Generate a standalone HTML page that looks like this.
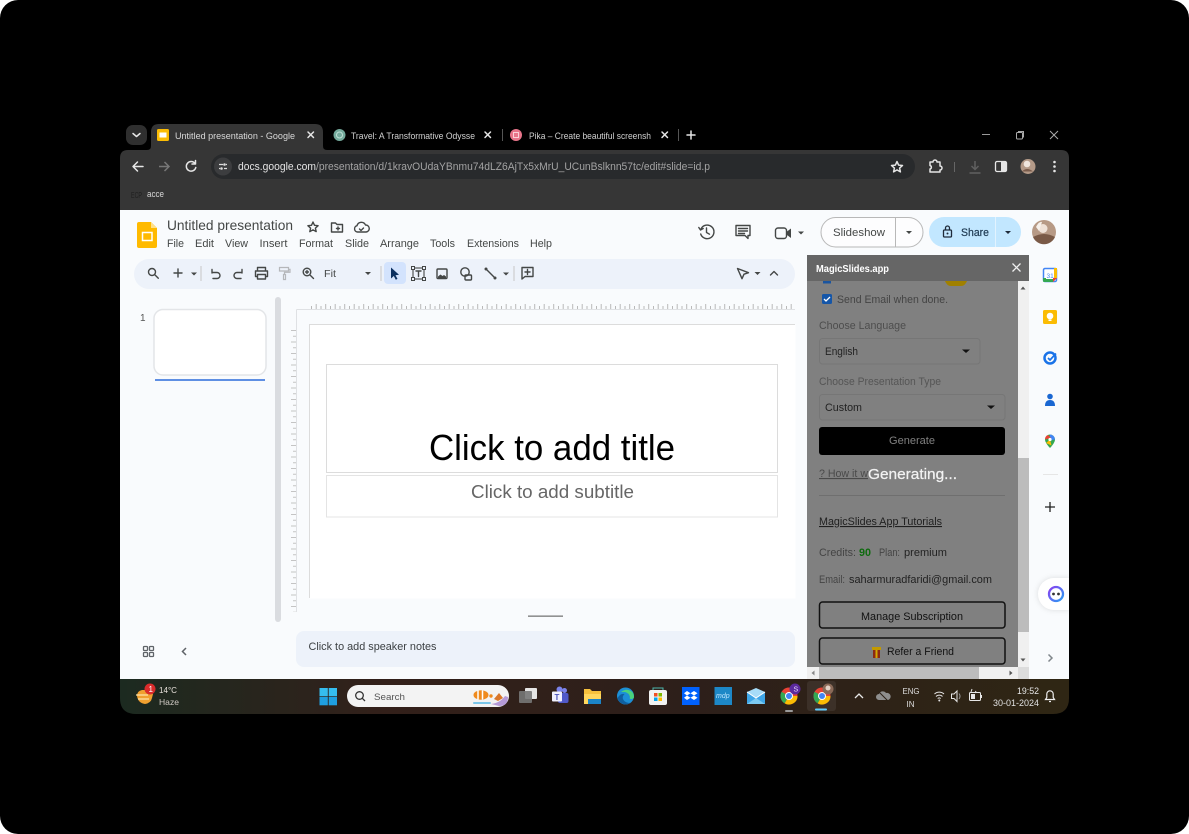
<!DOCTYPE html>
<html><head><meta charset="utf-8"><title>Untitled presentation</title>
<style>
html,body{margin:0;padding:0;background:#fff;width:1189px;height:834px;overflow:hidden}
svg{display:block;position:absolute;left:0;top:0;filter:blur(.35px)}
text{font-family:"Liberation Sans",sans-serif;font-size:11px;white-space:pre}
.ic{fill:none;stroke:#444746;stroke-width:1.4;stroke-linecap:round;stroke-linejoin:round}
.w{fill:none;stroke:#e6e6e6;stroke-width:1.5;stroke-linecap:round;stroke-linejoin:round}
.m{fill:#444746;font-size:10.8px}
.p{font-size:11px;fill:#444}
</style></head><body>
<svg width="1189" height="834" viewBox="0 0 1189 834" xmlns="http://www.w3.org/2000/svg">
<defs>
<pattern id="rx" x="311" y="302" width="19" height="8" patternUnits="userSpaceOnUse"><path d="M.5 7V4M5.2 7V2M10 7V4M14.700 7V2" stroke="#b9b9b9" stroke-width="1" fill="none"/></pattern>
<pattern id="ry" x="290" y="330" width="8" height="23" patternUnits="userSpaceOnUse"><path d="M1 .5H6M3 6.300H6M1 12H6M3 17.800H6" stroke="#c4c4c4" stroke-width="1" fill="none"/></pattern>
<linearGradient id="tb" x1="0" x2="1" y1="0" y2="0"><stop offset="0" stop-color="#1c2a20"/><stop offset=".28" stop-color="#33201a"/><stop offset=".6" stop-color="#2d1f1a"/><stop offset="1" stop-color="#2f2614"/></linearGradient>
<linearGradient id="cop" x1="0" x2="1" y1="0" y2="1"><stop offset="0" stop-color="#8a3ff0"/><stop offset="1" stop-color="#2a9df4"/></linearGradient>
<clipPath id="tbc"><path d="M120 679H1069V698Q1069 714 1053 714H136Q120 714 120 698Z"/></clipPath>
</defs>
<rect width="1189" height="834" fill="#fff"/>
<rect width="1189" height="834" rx="18" fill="#000"/>

<!-- tab strip -->
<rect x="126" y="125" width="21" height="20" rx="7" fill="#2f2f2f"/>
<path d="M133 133.500l3.500 3 3.500-3" class="w"/>
<path d="M147 150Q151 150 151 146V132Q151 124 159 124H315Q323 124 323 132V146Q323 150 327 150Z" fill="#353535"/>
<rect x="157" y="129" width="12" height="12" rx="1.500" fill="#fbbc04"/><rect x="159.500" y="132.500" width="7" height="5" fill="#fff"/>
<text x="175" y="139" fill="#d8d8d8" textLength="120" lengthAdjust="spacingAndGlyphs" style="font-size:9.500px">Untitled presentation - Google</text>
<path d="M308 132l5.500 5.500M313.500 132l-5.500 5.500" class="w"/>
<circle cx="339.500" cy="135" r="6" fill="#74aa9c"/><circle cx="339.500" cy="135" r="3" fill="none" stroke="#bfe0d6"/>
<text x="351" y="139" fill="#d0d0d0" textLength="124" lengthAdjust="spacingAndGlyphs" style="font-size:9.500px">Travel: A Transformative Odysse</text>
<path d="M485 132l5.500 5.500M490.500 132l-5.500 5.500" class="w"/>
<rect x="502" y="129" width="1" height="12" fill="#555"/>
<circle cx="516" cy="135" r="6" fill="#e8758a"/><rect x="513.500" y="132.500" width="5" height="5" fill="none" stroke="#fbd0d8"/>
<text x="529" y="139" fill="#d0d0d0" textLength="122" lengthAdjust="spacingAndGlyphs" style="font-size:9.500px">Pika – Create beautiful screensh</text>
<path d="M662 132l5.500 5.500M667.500 132l-5.500 5.500" class="w"/>
<rect x="678" y="129" width="1" height="12" fill="#555"/>
<path d="M691 131v8M687 135h8" class="w"/>
<path d="M982 134.500h8" stroke="#999" fill="none"/>
<rect x="1016.500" y="132.500" width="6" height="6.500" rx="1" fill="none" stroke="#aaa"/><path d="M1018.500 132v-.5h5v6" fill="none" stroke="#aaa"/>
<path d="M1050 131l8 8M1058 131l-8 8" stroke="#aaa" fill="none"/>

<!-- chrome toolbar -->
<path d="M120 210V158Q120 150 128 150H1061Q1069 150 1069 158V210Z" fill="#363636"/>
<path d="M143 166.500h-9.500M137.500 162l-4.500 4.500 4.500 4.500" class="w"/>
<path d="M159 166.500h9.500M164.500 162l4.500 4.500-4.500 4.500" fill="none" stroke="#777" stroke-width="1.500"/>
<path d="M195 163.500a4.800 4.800 0 1 0 .8 4M195.500 160.500v3.500h-3.500" class="w"/>
<rect x="211" y="154" width="704" height="25" rx="12.500" fill="#282a2c"/>
<circle cx="223" cy="166.500" r="9" fill="#3c3d3f"/>
<path d="M219 164.500h4M226 164.500h1M219 168.500h1M224 168.500h3" stroke="#ddd" stroke-width="1.300" fill="none"/><circle cx="224.500" cy="164.500" r="1.300" fill="#ddd"/><circle cx="221.500" cy="168.500" r="1.300" fill="#ddd"/>
<text x="238" y="170" fill="#e3e3e3" textLength="78" lengthAdjust="spacingAndGlyphs">docs.google.com</text>
<text x="316" y="170" fill="#a3a3a3" textLength="394" lengthAdjust="spacingAndGlyphs">/presentation/d/1kravOUdaYBnmu74dLZ6AjTx5xMrU_UCunBslknn57tc/edit#slide=id.p</text>
<path d="M897 161.500l1.600 3.600 3.900.4-2.900 2.600.8 3.800-3.400-2-3.400 2 .8-3.800-2.900-2.600 3.900-.4z" class="w" stroke-width="1.300"/>
<path d="M930 162h3a2 2 0 0 1 4 0h3v4a2 2 0 0 1 0 4v2h-10v-3a1.800 1.800 0 0 0 0-3.500z" class="w"/>
<rect x="954" y="162" width="1" height="10" fill="#666"/>
<path d="M975 161v8M971.500 166l3.500 3.500 3.500-3.500M969.500 173h11" fill="none" stroke="#606060" stroke-width="1.500"/>
<rect x="995.500" y="161.500" width="11" height="10" rx="1.500" fill="none" stroke="#e6e6e6" stroke-width="1.300"/><rect x="1001" y="161.500" width="5.500" height="10" fill="#e6e6e6"/>
<circle cx="1028" cy="166.500" r="7.500" fill="#b49a88"/><circle cx="1027" cy="164" r="3.300" fill="#f0e6de"/><path d="M1022 171.500q5-5 11 0" fill="#7a5c4c"/>
<circle cx="1054.500" cy="162" r="1.300" fill="#e6e6e6"/><circle cx="1054.500" cy="166.500" r="1.300" fill="#e6e6e6"/><circle cx="1054.500" cy="171" r="1.300" fill="#e6e6e6"/>
<text x="131" y="198" fill="#1f1f1f" textLength="11" lengthAdjust="spacingAndGlyphs" style="font-size:8px">ECP</text>
<text x="147" y="197" fill="#d8d8d8" textLength="17" lengthAdjust="spacingAndGlyphs" style="font-size:9px">acce</text>

<!-- docs -->
<rect x="120" y="210" width="949" height="469" fill="#f9fbfd"/>
<path d="M139 222H151L157 228V246Q157 248 155 248H139Q137 248 137 246V224Q137 222 139 222Z" fill="#ffba00"/>
<path d="M151 222L157 228H151Z" fill="#ffe08a"/>
<rect x="142.500" y="232.500" width="9.500" height="8" fill="none" stroke="#fff" stroke-width="1.500"/>
<text x="167" y="230" fill="#444746" textLength="126" lengthAdjust="spacingAndGlyphs" style="font-size:14px">Untitled presentation</text>
<path d="M313 222l1.500 3.300 3.600.4-2.700 2.400.8 3.500-3.200-1.800-3.200 1.800.8-3.500-2.700-2.400 3.600-.4z" class="ic" stroke-width="1.200"/>
<path d="M331.500 223h4l1.500 1.500h5.500v7.500h-11z" class="ic" stroke-width="1.200"/><path d="M336.500 228.500h3M338 227v3" class="ic" stroke-width="1"/>
<path d="M357.500 232a3.200 3.200 0 0 1-.5-6.300 4.500 4.500 0 0 1 8.500-.7 3.500 3.500 0 0 1 .5 7z" class="ic" stroke-width="1.200"/><path d="M359.500 229l1.500 1.500 2.500-2.500" class="ic" stroke-width="1"/>
<text class="m" x="167" y="247" textLength="17" lengthAdjust="spacingAndGlyphs">File</text>
<text class="m" x="195" y="247" textLength="19" lengthAdjust="spacingAndGlyphs">Edit</text>
<text class="m" x="225" y="247" textLength="23" lengthAdjust="spacingAndGlyphs">View</text>
<text class="m" x="259.500" y="247" textLength="28" lengthAdjust="spacingAndGlyphs">Insert</text>
<text class="m" x="299" y="247" textLength="34" lengthAdjust="spacingAndGlyphs">Format</text>
<text class="m" x="345" y="247" textLength="24" lengthAdjust="spacingAndGlyphs">Slide</text>
<text class="m" x="380" y="247" textLength="39" lengthAdjust="spacingAndGlyphs">Arrange</text>
<text class="m" x="430" y="247" textLength="25" lengthAdjust="spacingAndGlyphs">Tools</text>
<text class="m" x="467" y="247" textLength="52" lengthAdjust="spacingAndGlyphs">Extensions</text>
<text class="m" x="530" y="247" textLength="22" lengthAdjust="spacingAndGlyphs">Help</text>

<path d="M701 229a6.800 6.800 0 1 1 -.3 5M698.800 227.500l1.700 2.500 2.700-1.500M706.500 228v4.500l3 1.700" class="ic" stroke-width="1.500"/>
<path d="M736 225.500h14v10h-2v3l-3-3h-9z" class="ic" stroke-width="1.500"/><path d="M738.500 228.500h9M738.500 231h9M738.500 233.500h6" class="ic" stroke-width="1"/>
<rect x="775.500" y="228" width="11" height="10.500" rx="2.500" class="ic" stroke-width="1.500"/><path d="M787 231.500l4-3v9.500l-4-3z" fill="#444746"/>
<path d="M798 231.500h6l-3 3z" fill="#444746"/>
<rect x="821" y="217.500" width="102" height="29.500" rx="14.700" fill="#fff" fill-opacity=".6" stroke="#b8b8b8"/>
<rect x="895" y="218" width="1" height="29" fill="#b8b8b8"/>
<text x="833" y="236" fill="#444746" textLength="52" lengthAdjust="spacingAndGlyphs" style="font-size:11px">Slideshow</text>
<path d="M906 231h6l-3 3z" fill="#444746"/>
<rect x="929" y="217" width="92" height="30" rx="15" fill="#c2e7ff"/>
<rect x="995" y="217" width="1" height="30" fill="#e2f3ff"/>
<rect x="943.500" y="230" width="8" height="7" rx="1" fill="none" stroke="#1f2b3a" stroke-width="1.300"/><path d="M945.500 230v-2a2 2 0 0 1 4 0v2" fill="none" stroke="#1f2b3a" stroke-width="1.300"/><circle cx="947.500" cy="233.500" r="1" fill="#1f2b3a"/>
<text x="961" y="236" fill="#1f3a52" textLength="28" lengthAdjust="spacingAndGlyphs" style="font-size:11px;stroke:#1f3a52;stroke-width:.2px">Share</text>
<path d="M1005 231h6l-3 3z" fill="#1f2b3a"/>
<circle cx="1044" cy="232" r="12" fill="#b79a86"/><circle cx="1043" cy="228.500" r="4.500" fill="#efe2d8"/><path d="M1033 237q11-6 22 0a12 12 0 0 1-22 0z" fill="#7a5a47"/><path d="M1036 227q3-6 6-5l-3 9z" fill="#f6f0ea"/>

<!-- toolbar -->
<rect x="134" y="259" width="661" height="30" rx="15" fill="#edf2fa"/>
<circle cx="152" cy="272" r="3.500" class="ic"/><path d="M154.800 274.800l3.500 3.500" class="ic"/>
<path d="M178 269v8M174 273h8" class="ic" stroke-width="1.600"/>
<path d="M191 272.500h6l-3 3z" fill="#444746"/>
<rect x="200.500" y="266" width="1" height="15" fill="#c7c7c7"/>
<path d="M212 273v-3.500M212 272.500h5a3 3 0 0 1 0 6h-4" class="ic" stroke-width="1.200"/>
<path d="M242 273v-3.500M242 272.500h-5a3 3 0 0 0 0 6h4" class="ic" stroke-width="1.200"/>
<path d="M257.500 271v-3.500h8v3.500M257.500 276.500h-2v-5.500h12v5.500h-2M257.500 274.500h8v4.500h-8z" class="ic" stroke-width="1.200"/>
<path d="M279.500 267.500h9v3.500h-9zM288.500 269.300h1.500v3h-5.500v2M283.500 274.500h2v5h-2z" fill="none" stroke="#b5b7ba" stroke-width="1.200"/>
<circle cx="307" cy="272" r="3.800" class="ic"/><path d="M310 275l3.500 3.500M305.500 272h3M307 270.500v3" class="ic"/>
<text x="324" y="277" fill="#444746" textLength="12" lengthAdjust="spacingAndGlyphs" style="font-size:10.500px">Fit</text>
<path d="M365 272h6l-3 3z" fill="#444746"/>
<rect x="380.500" y="266" width="1" height="15" fill="#c7c7c7"/>
<rect x="384" y="262" width="22" height="22" rx="4" fill="#d3e3fd"/>
<path d="M391 267.500v11l2.800-2.500 2 3.800 1.700-.9-2-3.700 3.500-.4z" fill="#0b3060"/>
<rect x="413" y="268" width="11" height="11" fill="none" stroke="#444746" stroke-width="1.100"/>
<rect x="411.500" y="266.500" width="3" height="3" fill="#edf2fa" stroke="#444746"/><rect x="422.500" y="266.500" width="3" height="3" fill="#edf2fa" stroke="#444746"/><rect x="411.500" y="277.500" width="3" height="3" fill="#edf2fa" stroke="#444746"/><rect x="422.500" y="277.500" width="3" height="3" fill="#edf2fa" stroke="#444746"/>
<path d="M416 271h5M418.500 271v5.500" class="ic" stroke-width="1.100"/>
<rect x="437" y="269" width="10" height="9.500" rx="1" class="ic" stroke-width="1.200"/><path d="M438 276.500l2.500-2 2 1.500 1.500-1 2 1.500v1.500h-8z" fill="#444746"/>
<circle cx="465" cy="272" r="4.200" class="ic" stroke-width="1.200"/><rect x="465" y="275" width="6.500" height="5" rx="1" class="ic" stroke-width="1.200"/>
<path d="M486 269l9 9" class="ic" stroke-width="1.600"/><circle cx="486" cy="269" r="1.500" fill="#444746"/><circle cx="495" cy="278" r="1.500" fill="#444746"/>
<path d="M503 272.500h6l-3 3z" fill="#444746"/>
<rect x="513.500" y="266" width="1" height="15" fill="#c7c7c7"/>
<path d="M522 267.500h11v9h-8l-3 2.500z" class="ic" stroke-width="1.200"/><path d="M527.500 269.500v5M525 272h5" class="ic" stroke-width="1.200"/>
<path d="M737.500 268.500l11 4.200-4.500 1.500-2 4.500z" class="ic" stroke-width="1.300"/>
<path d="M754.500 272h6l-3 3z" fill="#444746"/>
<path d="M770.500 275l3.500-3.500 3.500 3.500" class="ic"/>

<!-- filmstrip -->
<text x="140" y="321" fill="#555" style="font-size:10px">1</text>
<rect x="154" y="309.500" width="112" height="65.500" rx="9" fill="#fff" stroke="#e3e5e8" stroke-width="1.500"/>
<rect x="155" y="379" width="110" height="2" fill="#5f8fe3"/>
<rect x="275" y="297" width="6" height="325" rx="3" fill="#dadce0"/>

<!-- canvas -->
<rect x="311" y="302" width="482" height="8" fill="url(#rx)"/>
<rect x="290" y="330" width="7" height="282" fill="url(#ry)"/>
<path d="M296.500 309.500H795M296.500 309.500V612" stroke="#dfe1e4" fill="none"/>
<rect x="309.500" y="324.500" width="486" height="274" fill="#fff"/>
<path d="M309.500 598V324.500H795" stroke="#dcdcdc" fill="none"/>
<rect x="326.500" y="364.500" width="451" height="108" fill="#fff" stroke="#dcdcdc"/>
<rect x="326.500" y="475.500" width="451" height="41.500" fill="#fff" stroke="#e4e4e4"/>
<text x="429" y="460" fill="#000" textLength="246" lengthAdjust="spacingAndGlyphs" style="font-size:36px">Click to add title</text>
<text x="471" y="498" fill="#666" textLength="163" lengthAdjust="spacingAndGlyphs" style="font-size:18px">Click to add subtitle</text>
<rect x="528" y="615.500" width="35" height="1.300" fill="#777"/>
<rect x="296" y="631" width="499" height="36" rx="8" fill="#edf2fa"/>
<text x="308.500" y="650" fill="#3c4043" textLength="128" lengthAdjust="spacingAndGlyphs" style="font-size:11px">Click to add speaker notes</text>
<g fill="none" stroke="#5f6368" stroke-width="1.300"><rect x="143.500" y="646.500" width="4" height="4" rx=".7"/><rect x="149.500" y="646.500" width="4" height="4" rx=".7"/><rect x="143.500" y="652.500" width="4" height="4" rx=".7"/><rect x="149.500" y="652.500" width="4" height="4" rx=".7"/></g>
<path d="M186 648l-3.500 3.500 3.500 3.500" fill="none" stroke="#5f6368" stroke-width="1.500"/>

<!-- magic panel -->
<rect x="807" y="255" width="222" height="26" fill="#666"/>
<rect x="807" y="281" width="211" height="386" fill="#808080"/>
<rect x="1018" y="281" width="11" height="386" fill="#f0f0f0"/>
<rect x="1018" y="458" width="11" height="174" fill="#bcbcbc"/>
<path d="M1020.500 289.500h5l-2.500-3z" fill="#555"/><path d="M1020.500 658.500h5l-2.500 3z" fill="#555"/>
<rect x="807" y="667" width="211" height="12" fill="#f0f0f0"/>
<rect x="819" y="667" width="160" height="12" fill="#bcbcbc"/>
<rect x="1018" y="667" width="11" height="12" fill="#dcdcdc"/>
<path d="M814.500 670.500v5l-3-2.500z" fill="#888"/><path d="M1009.500 670.500v5l3-2.500z" fill="#555"/>
<text x="816" y="272" fill="#fff" textLength="73" lengthAdjust="spacingAndGlyphs" style="font-size:10.500px;font-weight:bold">MagicSlides.app</text>
<path d="M1012.500 263.500l8 8M1020.500 263.500l-8 8" fill="none" stroke="#f0f0f0" stroke-width="1.300"/>
<rect x="823" y="281" width="8" height="2.500" fill="#1a55a0"/>
<path d="M945 281h22q-2 5-6 5h-10q-4 0-6-5z" fill="#a08000"/>
<rect x="822" y="294" width="10" height="10" rx="1.500" fill="#1556a8"/>
<path d="M824 299l2 2 4-4" fill="none" stroke="#fff" stroke-width="1.300"/>
<text class="p" x="837" y="303" textLength="111" lengthAdjust="spacingAndGlyphs">Send Email when done.</text>
<text class="p" x="819" y="329" textLength="87" lengthAdjust="spacingAndGlyphs" style="fill:#4d4d4d">Choose Language</text>
<rect x="819.500" y="338.500" width="160.500" height="25.500" rx="3" fill="none" stroke="#767676"/>
<text class="p" x="825" y="355" textLength="33" lengthAdjust="spacingAndGlyphs" style="fill:#222">English</text>
<path d="M962 349.500h8l-4 3.500z" fill="#111"/>
<text class="p" x="819" y="385" textLength="122" lengthAdjust="spacingAndGlyphs" style="fill:#555">Choose Presentation Type</text>
<rect x="819.500" y="394.500" width="185.500" height="25.500" rx="3" fill="none" stroke="#767676"/>
<text class="p" x="825" y="411" textLength="37" lengthAdjust="spacingAndGlyphs" style="fill:#222">Custom</text>
<path d="M987 405.500h8l-4 3.500z" fill="#111"/>
<rect x="819" y="427" width="186" height="28" rx="3" fill="#000"/>
<text class="p" x="889" y="444" textLength="46" lengthAdjust="spacingAndGlyphs" style="fill:#808080">Generate</text>
<text class="p" x="819" y="477" textLength="49" lengthAdjust="spacingAndGlyphs" style="fill:#4a4a4a;text-decoration:underline">? How it w</text>
<text x="868" y="479" fill="#f2f2f2" textLength="89" lengthAdjust="spacingAndGlyphs" style="font-size:15px;stroke:#f2f2f2;stroke-width:.25px">Generating...</text>
<rect x="819" y="495" width="186" height="1" fill="#6f6f6f"/>
<text class="p" x="819" y="525" textLength="123" lengthAdjust="spacingAndGlyphs" style="fill:#1f1f1f;text-decoration:underline">MagicSlides App Tutorials</text>
<text class="p" x="819" y="556" textLength="37" lengthAdjust="spacingAndGlyphs">Credits:</text>
<text class="p" x="859" y="556" textLength="12" lengthAdjust="spacingAndGlyphs" style="fill:#0f6b0f;font-weight:bold">90</text>
<text class="p" x="879" y="556" textLength="21" lengthAdjust="spacingAndGlyphs">Plan:</text>
<text class="p" x="904" y="556" textLength="43" lengthAdjust="spacingAndGlyphs" style="fill:#222">premium</text>
<text class="p" x="819" y="583" textLength="26" lengthAdjust="spacingAndGlyphs">Email:</text>
<text class="p" x="849" y="583" textLength="143" lengthAdjust="spacingAndGlyphs" style="fill:#222">saharmuradfaridi@gmail.com</text>
<rect x="819.500" y="602" width="185.500" height="26" rx="3" fill="none" stroke="#111" stroke-width="1.500"/>
<text class="p" x="861" y="620" textLength="102" lengthAdjust="spacingAndGlyphs" style="fill:#111">Manage Subscription</text>
<rect x="819.500" y="638" width="185.500" height="26" rx="3" fill="none" stroke="#111" stroke-width="1.500"/>
<rect x="872" y="647" width="9" height="3" fill="#c49a00"/><rect x="873" y="650" width="7" height="8" fill="#8c2a12"/><rect x="875.500" y="650" width="2" height="8" fill="#d4a800"/>
<text class="p" x="887" y="655" textLength="67" lengthAdjust="spacingAndGlyphs" style="fill:#111">Refer a Friend</text>

<!-- right rail -->
<rect x="1043.500" y="268.500" width="13" height="13" rx="1.500" fill="#fff" stroke="#4285f4" stroke-width="1.500"/>
<path d="M1043 278v3a1 1 0 0 0 1 1h9v-3h-7v-1z" fill="#34a853"/><path d="M1053 282l4-4h-4z" fill="#ea4335"/><path d="M1054 268h3v10h-3z" fill="#fbbc04"/>
<text x="1046.500" y="278" fill="#4285f4" style="font-size:6.500px">31</text>
<rect x="1043" y="310" width="14" height="14" rx="1.500" fill="#fbbc04"/>
<circle cx="1050" cy="316" r="3.300" fill="#fff"/><rect x="1048.500" y="319.500" width="3" height="1.500" fill="#fff"/>
<circle cx="1050" cy="358" r="5.500" fill="none" stroke="#1a73e8" stroke-width="2.500"/><path d="M1048 358l2 2 6-6.500" fill="none" stroke="#1a73e8" stroke-width="1.700"/>
<circle cx="1050" cy="396.500" r="2.800" fill="#1a67d2"/><path d="M1045 406q0-6 5-6t5 6z" fill="#1a67d2"/>
<path d="M1050 434.500a5 5 0 0 0-5 5c0 3.500 5 8.500 5 8.500s5-5 5-8.500a5 5 0 0 0-5-5z" fill="#34a853"/><path d="M1050 434.500a5 5 0 0 1 5 5l-5 1z" fill="#4285f4"/><path d="M1045 439.500a5 5 0 0 1 3-4.500l3 3z" fill="#ea4335"/><path d="M1046 443l4-3.500 1.500 6z" fill="#fbbc04"/><circle cx="1050" cy="439.500" r="1.600" fill="#fff"/>
<rect x="1043" y="474" width="15" height="1" fill="#e6e6e6"/>
<path d="M1050 502v10M1045 507h10" fill="none" stroke="#222" stroke-width="1.300"/>
<path d="M1054 578h15v32h-15a16 16 0 0 1 0-32z" fill="#fff" style="filter:drop-shadow(0 0 3px rgba(0,0,0,.12))"/>
<circle cx="1056" cy="594" r="7" fill="#fff" stroke="url(#cop)" stroke-width="2.300"/>
<circle cx="1053.500" cy="594" r="1.400" fill="#333"/><circle cx="1058.500" cy="594" r="1.400" fill="#333"/>
<path d="M1048.500 654.500l3.500 3.500-3.500 3.500" fill="none" stroke="#80868b" stroke-width="1.500"/>

<!-- taskbar -->
<g clip-path="url(#tbc)"><rect x="120" y="679" width="949" height="35" fill="url(#tb)"/></g>
<path d="M137 696q0-5 5-6h4q4 1 7 4l-1 4q-1 5-7 6-7-1-8-8z" fill="#f0a030"/><path d="M136 695h12M138 699h11" stroke="#fde2a8" stroke-width="1.300"/>
<circle cx="150" cy="689" r="5.500" fill="#d92b2b"/><text x="148.500" y="692" fill="#fff" style="font-size:8px">1</text>
<text x="159" y="693" fill="#e6e0da" textLength="18" lengthAdjust="spacingAndGlyphs" style="font-size:8.500px">14°C</text>
<text x="159" y="705" fill="#d0cac4" textLength="20" lengthAdjust="spacingAndGlyphs" style="font-size:8.500px">Haze</text>
<g fill="#35bdef"><rect x="319.500" y="688" width="8.300" height="8.300"/><rect x="328.700" y="688" width="8.300" height="8.300"/></g><g fill="#1f9fe0"><rect x="319.500" y="697" width="8.300" height="8.300"/><rect x="328.700" y="697" width="8.300" height="8.300"/></g>
<rect x="347" y="685" width="162" height="22" rx="11" fill="#f3f3f3"/>
<circle cx="359.500" cy="695.500" r="3.800" fill="none" stroke="#333" stroke-width="1.300"/><path d="M362.300 698.300l2.700 2.700" stroke="#333" stroke-width="1.300"/>
<text x="374" y="700" fill="#555" textLength="31" lengthAdjust="spacingAndGlyphs" style="font-size:9.500px">Search</text>
<ellipse cx="481" cy="695" rx="7.500" ry="4.800" fill="#ef8a1d"/><path d="M478 690.500v9M482.500 690.500v9" stroke="#fff" stroke-width="1.500"/><circle cx="491" cy="696" r="1.700" fill="#ef8a1d"/>
<path d="M491 704q9-1 14-8l3 1q0 9-9 9z" fill="#b59ad8"/><path d="M494 699l5-6 4 5-5 3z" fill="#d9762a"/><rect x="473" y="702" width="18" height="2" rx="1" fill="#7ac6ea"/>
<rect x="525" y="688" width="12" height="11" rx="1" fill="#e5e5e5"/><rect x="519" y="691" width="13" height="12" rx="1" fill="#777" fill-opacity=".9"/>
<circle cx="564.500" cy="690.500" r="2.500" fill="#7b83eb"/><rect x="558" y="693" width="10.500" height="10" rx="2" fill="#5059c9"/><circle cx="559.500" cy="689.500" r="3" fill="#7b83eb"/><rect x="552" y="691.500" width="10" height="10" rx="1" fill="#f0f0ff"/><text x="554.500" y="700" fill="#4b53bc" style="font-size:8px;font-weight:bold">T</text>
<path d="M584 689h6l2 2h9v13h-17z" fill="#f6c13d"/><rect x="584" y="694" width="17" height="10" fill="#ffd75e"/><rect x="588" y="699" width="13" height="5" fill="#1b84c8"/>
<circle cx="625.500" cy="696" r="8.500" fill="#1c8fd6"/><path d="M617.500 698a8.500 8.500 0 0 0 13 5q-5 0-7-3t1-6q-4-1-7 4z" fill="#0f5fa0"/><path d="M621 692q5-4 10-1 3 2 3 6 0 2-3 2-2 0-1-2-1-4-5-5z" fill="#4ad27c"/>
<rect x="649" y="690" width="18" height="15" rx="2" fill="#f2f2f2"/><path d="M653 690v-2h10v2" stroke="#4db6ac" fill="none"/>
<rect x="654" y="693" width="3.500" height="3.500" fill="#f25022"/><rect x="658.500" y="693" width="3.500" height="3.500" fill="#7fba00"/><rect x="654" y="697.500" width="3.500" height="3.500" fill="#00a4ef"/><rect x="658.500" y="697.500" width="3.500" height="3.500" fill="#ffb900"/>
<rect x="682" y="687" width="17.500" height="18" fill="#0061fe"/><path d="M687 691l3.500 2.200-3.500 2.300-3-2.300zM694 691l3.500 2.200-3.500 2.300-3.500-2.300zM687 695.500l3.500 2.300-3.500 2.200-3-2.200zM694 695.500l3.500 2.300-3.500 2.200-3.500-2.200z" fill="#fff"/>
<rect x="714.500" y="687" width="17.500" height="18" fill="#1d88c7"/><text x="716" y="698" fill="#bfe6ff" style="font-size:7px;font-style:italic">mdp</text>
<rect x="747" y="692" width="18" height="12" fill="#3ea6e8"/><path d="M747 692l9-4 9 4-9 6z" fill="#a6dcf8"/><path d="M747 704l9-6 9 6z" fill="#7ccaf2"/><path d="M747 692l9 6 9-6" fill="none" stroke="#fff"/>
<circle cx="789" cy="696" r="8.500" fill="#ea4335"/><path d="M789 696l-4.300 7.400a8.500 8.500 0 0 1-3.100-11.600z" fill="#34a853"/><path d="M789 696l8.500 0a8.500 8.500 0 0 1-12.800 7.400z" fill="#fbbc04"/><circle cx="789" cy="696" r="4" fill="#fff"/><circle cx="789" cy="696" r="3" fill="#4285f4"/>
<circle cx="795" cy="689" r="5.500" fill="#5b2a9d"/><text x="793.500" y="691.500" fill="#e6d8ff" style="font-size:7px">S</text>
<rect x="785" y="710" width="8" height="2" rx="1" fill="#9a9a9a"/>
<rect x="807" y="681" width="29" height="30" rx="3" fill="#fff" fill-opacity=".07"/>
<circle cx="822" cy="696" r="8.500" fill="#ea4335"/><path d="M822 696l-4.300 7.400a8.500 8.500 0 0 1-3.100-11.600z" fill="#34a853"/><path d="M822 696l8.500 0a8.500 8.500 0 0 1-12.800 7.400z" fill="#fbbc04"/><circle cx="822" cy="696" r="4" fill="#fff"/><circle cx="822" cy="696" r="3" fill="#4285f4"/>
<circle cx="828" cy="689" r="5.500" fill="#8a6a58"/><circle cx="828" cy="688" r="2.500" fill="#e2d2c6"/>
<rect x="815" y="708.500" width="12" height="2" rx="1" fill="#60cdff"/>
<path d="M855 698l4-4 4 4" fill="none" stroke="#e8e8e8" stroke-width="1.300"/>
<path d="M879 700a3 3 0 0 1 0-6 4 4 0 0 1 7-1 3.500 3.500 0 0 1 2 7z" fill="#8e8e8e"/><path d="M878 691l10 10" stroke="#2a2016" stroke-width="1"/>
<text x="902.500" y="694" fill="#dedede" textLength="17" lengthAdjust="spacingAndGlyphs" style="font-size:8.500px">ENG</text>
<text x="906.500" y="707" fill="#dedede" textLength="8" lengthAdjust="spacingAndGlyphs" style="font-size:8.500px">IN</text>
<path d="M934.500 694a7 7 0 0 1 9.500 0M936 696.500a4.500 4.500 0 0 1 6.500 0M937.700 698.500a2 2 0 0 1 3 0" fill="none" stroke="#e6e6e6" stroke-width="1"/><circle cx="939.300" cy="700.500" r="1" fill="#e6e6e6"/>
<path d="M951.500 694h2.500l3-3v10.500l-3-3h-2.500z" fill="none" stroke="#e6e6e6"/><path d="M959 693.500q2 2.700 0 5.500" fill="none" stroke="#999"/>
<rect x="969.500" y="692.500" width="11" height="8" rx="1" fill="none" stroke="#e6e6e6"/><rect x="971" y="694" width="4" height="5" fill="#e6e6e6"/><path d="M972 689l-1 3M976 691l-1 2" stroke="#e6e6e6"/><rect x="980.500" y="695" width="1.500" height="3" fill="#e6e6e6"/>
<text x="1017" y="694" fill="#e6e6e6" textLength="22" lengthAdjust="spacingAndGlyphs" style="font-size:9px">19:52</text>
<text x="993" y="706" fill="#e0e0e0" textLength="46" lengthAdjust="spacingAndGlyphs" style="font-size:9px">30-01-2024</text>
<path d="M1045.500 699.500h9l-1.300-2v-3.500a3.200 3.200 0 0 0-6.400 0v3.500zM1049 701.500h2" fill="none" stroke="#eee" stroke-width="1.200"/>
</svg>
</body></html>
